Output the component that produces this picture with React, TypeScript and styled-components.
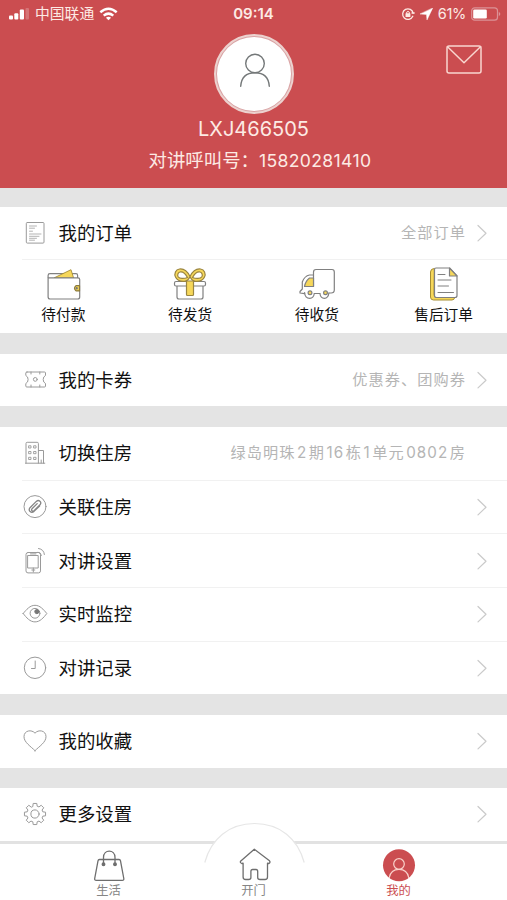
import React from "react";
import styled, { createGlobalStyle } from "styled-components";

const RED = "#cb4d50";
const GREY = "#e4e4e4";
const YELLOW = "#f6d75a";

const GlobalStyle = createGlobalStyle`
  * { box-sizing: border-box; }
  body {
    margin: 0;
    background: #fff;
    font-family: Inter, "Noto Sans CJK SC", sans-serif;
  }
`;

const Screen = styled.div`
  width: 507px;
  height: 900px;
  display: flex;
  flex-direction: column;
  overflow: hidden;
  background: ${GREY};
`;

const Header = styled.header`
  height: 188px;
  flex: none;
  display: flex;
  flex-direction: column;
  background: ${RED};
  color: #fdeae4;
`;

const StatusBar = styled.div`
  height: 28px;
  display: grid;
  grid-template-columns: 1fr auto 1fr;
  align-items: center;
  padding: 0 6px 0 9px;
  font-size: 14.5px;
  line-height: 20px;
`;

const StatusGroup = styled.div<{ $end?: boolean }>`
  display: flex;
  align-items: center;
  justify-content: ${(p) => (p.$end ? "flex-end" : "flex-start")};
  gap: 5px;
`;

const Carrier = styled.span`
  font-size: 14.8px;
  line-height: 20px;
`;

const Percent = styled.span`
  letter-spacing: -0.3px;
`;

const Clock = styled.div`
  font-weight: 600;
  font-size: 15px;
  padding-right: 3px;
`;

const Profile = styled.div`
  display: grid;
  grid-template-columns: 1fr auto 1fr;
  align-items: start;
  padding: 6px 25px 0;
`;

const Avatar = styled.div`
  grid-column: 2;
  width: 80px;
  height: 80px;
  margin-left: 1px;
  border-radius: 50%;
  border: 2px solid #ecd2cf;
  padding: 1px;
  background: #d9a3a4;
  display: flex;
`;

const AvatarFace = styled.div`
  flex: 1;
  display: flex;
  align-items: center;
  justify-content: center;
  padding: 0 0 6px 1px;
  border-radius: 50%;
  background: #fff;
`;

const MailButton = styled.button`
  justify-self: end;
  margin: 11px 0 0;
  padding: 0;
  border: 0;
  background: none;
  line-height: 0;
`;

const UserName = styled.div`
  margin-top: 3px;
  text-align: center;
  font-size: 20px;
  line-height: 24px;
  letter-spacing: 0;
`;

const CallNumber = styled.div`
  margin: 5px 0 0 13px;
  text-align: center;
  font-size: 18.4px;
  line-height: 28px;
  white-space: nowrap;
`;

const CallDigits = styled.span`
  font-size: 17.6px;
  letter-spacing: 0.35px;
`;

const List = styled.main`
  flex: 1;
  min-height: 0;
  display: flex;
  flex-direction: column;
  gap: 20.5px;
  padding-top: 18.5px;
`;

const Card = styled.section`
  flex: none;
  background: #fff;
`;

const Row = styled.div<{ $divided?: boolean }>`
  height: ${(p) => (p.$divided ? "53.7px" : "52.7px")};
  margin-left: 22px;
  padding-right: 20px;
  display: flex;
  align-items: center;
  border-bottom: ${(p) => (p.$divided ? "1px solid #f1f1f1" : "0")};
`;

const RowLabel = styled.span`
  flex: 1;
  margin-left: 10.5px;
  color: #111;
  font-size: 18.4px;
  line-height: 26px;
`;

const RowNote = styled.span`
  color: #b5b5b5;
  font-size: 15.2px;
  line-height: 24px;
  letter-spacing: 1.05px;
  margin-right: 10px;
`;

const NoteNumber = styled.span`
  margin: 0 1.5px;
`;

const ChevronSlot = styled.span`
  width: 11px;
  height: 18px;
  flex: none;
`;

const OrderGrid = styled.div`
  height: 73px;
  display: grid;
  grid-template-columns: repeat(4, 1fr);
`;

const OrderItem = styled.div`
  display: flex;
  flex-direction: column;
  align-items: center;
  padding-top: 6px;
  color: #111;
  font-size: 14.7px;
  line-height: 22px;
`;

const TabBar = styled.nav`
  position: relative;
  flex: none;
  height: 59px;
  display: grid;
  grid-template-columns: repeat(3, 145px);
  justify-content: center;
  border-top: 3px solid #e2e2e2;
  background: #fff;
`;

const Tab = styled.div<{ $active?: boolean }>`
  position: relative;
  display: flex;
  flex-direction: column;
  align-items: center;
  padding-top: 4px;
  color: ${(p) => (p.$active ? RED : "#858585")};
  font-size: 12.3px;
  line-height: 18px;
`;

const TabBump = styled.svg`
  position: absolute;
  left: 203px;
  top: -22px;
`;

const Drawing = styled.svg`
  display: block;
  flex: none;
  fill: none;
  stroke-linecap: round;
  stroke-linejoin: round;
`;

const RowSvg = ({ children }: { children: React.ReactNode }) => (
  <Drawing width="26" height="28" viewBox="0 0 26 28" stroke="#9a9a9a" strokeWidth="1">
    {children}
  </Drawing>
);

const OrderSvg = ({ children }: { children: React.ReactNode }) => (
  <Drawing width="38" height="38" viewBox="0 0 38 38" stroke="#808080" strokeWidth="1.2">
    {children}
  </Drawing>
);

const Chevron = () => (
  <Drawing width="11" height="18" viewBox="0 0 11 18" stroke="#cacaca" strokeWidth="1.2">
    <path d="M2 1.500 10 9.200 2 16.900" />
  </Drawing>
);

const gearPath = (() => {
  const points: string[] = [];
  for (let i = 0; i < 8; i++) {
    const base = (i * Math.PI) / 4;
    [
      [-0.27, 8.1],
      [-0.17, 10.7],
      [0.17, 10.7],
      [0.27, 8.1],
    ].forEach(([offset, radius]) => {
      const angle = base + offset;
      points.push(`${(13 + radius * Math.sin(angle)).toFixed(2)} ${(14 - radius * Math.cos(angle)).toFixed(2)}`);
    });
  }
  return `M${points.join("L")}Z`;
})();

const rowIcons = {
  order: (
    <RowSvg>
      <rect x="4.3" y="3.5" width="17.7" height="20.6" rx="1" />
      <path d="M7.5 7h7M7.5 9.2h5M7.5 12.2h3M7.5 15h11.5M7.5 17.3h9.5M7.5 19.3h7M7.5 21.2h5" strokeWidth=".9" stroke="#aaa" />
    </RowSvg>
  ),
  ticket: (
    <RowSvg>
      <path d="M5 6h17.500q1 0 1 1v2.500q-2.300 1-2.300 4t2.300 4V20q0 1-1 1H4.800q-1 0-1-1v-2.500q2.300-1 2.300-4t-2.300-4V7q0-1 1.200-1Z" />
      <circle cx="13.3" cy="13.4" r="1.9" />
      <path d="M9 6v2M17.8 6v2M9 19v2M17.8 19v2" />
    </RowSvg>
  ),
  building: (
    <RowSvg>
      <path d="M4 24.200V4.500q0-1.200 1.200-1.200H15.200q1.200 0 1.200 1.200v19.700M16.400 11.500h5.100v12.700M3.500 24.200h19.300M19.200 21v3" />
      <path d="M7 6.800h2v2.200H7zM12 6.800h2v2.200h-2zM7 12.500h2v2.200H7zM12 12.500h2v2.200h-2zM7 18.300h2v2.200H7zM12 18.300h2v2.200h-2z" strokeWidth=".9" />
    </RowSvg>
  ),
  clip: (
    <RowSvg>
      <circle cx="13" cy="13.600" r="11" />
      <path
        d="m17.600 13-5.600 5.400c-2.800 2.400-6.200-.8-4-3.700l6.300-6.300c2.500-2.200 5.900.6 3.700 3.400l-6 5.900c-1.500 1.200-3.200-.4-2-1.900l5.200-5.200"
        stroke="#858585"
        strokeWidth="1.300"
      />
    </RowSvg>
  ),
  phone: (
    <RowSvg>
      <rect x="4" y="5.500" width="14.500" height="20.400" rx="2" />
      <rect x="6" y="8.500" width="10.200" height="12.500" />
      <path d="M8.500 6.900h5.500M11.300 21v4M9.800 23h3" />
      <path d="M16.200 5.200q3 .4 3.200 3.300M16.500 1.500q5.400.7 5.900 6" />
    </RowSvg>
  ),
  eye: (
    <RowSvg>
      <path d="M1.200 13.500C4.500 9.500 8 5.300 13 5.300S21.500 9.500 24.800 13.500C21.500 17.800 18 21.900 13 21.900S4.500 17.800 1.200 13.500Z" />
      <circle cx="13" cy="13.300" r="4.900" />
      <circle cx="14.900" cy="11.600" r="2.100" fill="#777" stroke="#777" />
    </RowSvg>
  ),
  clock: (
    <RowSvg>
      <circle cx="13" cy="13.800" r="10.700" />
      <path d="M13.200 7v7.500H9.500" />
    </RowSvg>
  ),
  heart: (
    <RowSvg>
      <path d="M13 23.700C9 19.500 2 15.500 2 9.700 2 3.200 9.800 2.200 13 6.200c3.200-4 11-3 11 3.500 0 5.800-7 9.800-11 14Z" />
    </RowSvg>
  ),
  gear: (
    <RowSvg>
      <path d={gearPath} />
      <circle cx="13" cy="14" r="4.100" />
    </RowSvg>
  ),
};

const WalletIcon = () => (
  <OrderSvg>
    <path d="M4.100 11.500V9.500Q4.100 7.700 6 7.700H32Q33.600 7.700 33.600 9.500V12" fill="#fff" />
    <path d="M10.500 11.700 27 3.700 29.500 11.700Z" fill={YELLOW} stroke="#a58d35" strokeWidth=".9" />
    <path d="M4.100 11.900H34Q35.700 11.900 35.700 13.600V31Q35.700 33 33.700 33H6.100Q4.100 33 4.100 31Z" fill="#fff" />
    <path d="M35.500 19.700H32q-3 2.600 0 5.200h3.500Z" fill={YELLOW} stroke="#8c7a3a" />
    <circle cx="32.700" cy="22.300" r=".6" stroke="#777" />
  </OrderSvg>
);

const GiftIcon = () => (
  <OrderSvg>
    <path d="M6 19h26v12q0 2-2 2H8q-2 0-2-2Z" fill="#fff" />
    <path d="M5 15.500h28q1.500 0 1.500 1.500v1.500q0 1.500-1.500 1.500H5q-1.500 0-1.500-1.500V17q0-1.500 1.500-1.500Z" fill="#fff" />
    <path
      d="M19 10.500C16 4.500 12.500 2.500 8.500 3c-4 .5-5.500 5-4 8 1.600 3.500 5.500 4.500 9 4.300 3-.2 4.500-2.300 5.500-4.800 1 2.500 2.500 4.600 5.500 4.800 3.500.2 7.400-.8 9-4.300 1.500-3 0-7.500-4-8-4-.5-7.500 1.500-10.500 7.500Z"
      fill={YELLOW}
      stroke="#9a8540"
    />
    <path d="M16.500 11.500C14 7 11.500 5.500 9 6c-2 .5-3 3-1.800 4.800 1.400 1.900 5.600 2.200 9.300.7ZM21.500 11.500C24 7 26.500 5.500 29 6c2 .5 3 3 1.800 4.800-1.400 1.900-5.600 2.200-9.300.7Z" fill="#fff" stroke="#9a8540" />
    <path d="M15.500 15h7v13.500q0 1-1 1h-5q-1 0-1-1Z" fill={YELLOW} stroke="#9a8540" />
  </OrderSvg>
);

const TruckIcon = () => (
  <OrderSvg>
    <path d="M15.500 20.500V6q0-2.500 2.500-2.500H34q2.300 0 2.300 2.500V24q0 3-3.200 3h-2.300" />
    <path d="M15.500 9H11.500Q6.500 10 4.300 16v7L2 25.500v1.500l4.600.7M16.300 27.500h5.600" />
    <path d="M15.500 12v8.500H6.500q1-5.500 5-8.500Z" fill={YELLOW} />
    <path d="M6.600 26.500q.3 5.800 5.200 5.800 3.700 0 4.500-4.800M21.900 27.500q.7 4.800 4.500 4.800t4.500-5.300" />
    <circle cx="12" cy="26.700" r="1.900" fill={YELLOW} />
    <circle cx="27.500" cy="26.700" r="1.900" fill={YELLOW} />
  </OrderSvg>
);

const DocsIcon = () => (
  <OrderSvg>
    <path d="M9 2.500Q5.500 2.700 5.500 6v25q0 3 3 3h18.500q2.500 0 2.800-3H11Q9 31 9 28.500Z" fill={YELLOW} stroke="#a58d35" strokeWidth="1" />
    <path d="M11 2H24.500L32 10v19.500q0 2-2 2H11.500q-2 0-2-2v-26Q9.500 2 11 2Z" fill="#fff" />
    <path d="M24.500 2 32 10h-7.500Z" fill={YELLOW} />
    <path d="M13 8.500h7M13 14h13M13 20h10.500M13 26.500h15.500" strokeWidth="1" />
  </OrderSvg>
);

const SignalIcon = () => (
  <Drawing width="21" height="12" viewBox="0 0 21 12">
    <g fill="#fff">
      <rect x="0" y="7.500" width="4" height="4" rx="1" />
      <rect x="5.300" y="5.300" width="4" height="6.200" rx="1" />
      <rect x="10.800" y="1.500" width="4.200" height="10" rx="1" />
      <rect x="16.500" y="0" width="3.500" height="11.500" rx="1" opacity=".22" />
    </g>
  </Drawing>
);

const WifiIcon = () => (
  <Drawing width="19" height="14" viewBox="0 0 19 14" stroke="#fff" strokeWidth="2.500">
    <path d="M1.300 5.200q8.200-7 16.400 0M4.700 8.600q4.800-3.900 9.600 0" strokeLinecap="butt" />
    <path d="m9.500 13.200-2.600-2.500q2.600-2 5.200 0Z" fill="#fff" stroke="none" />
  </Drawing>
);

const LockIcon = () => (
  <Drawing width="14" height="14" viewBox="0 0 14 14" stroke="#fdeae4" strokeWidth="1.300">
    <path d="M11.800 9.300A5.300 5.300 0 1 1 12.200 6.300M11 6h2.200" />
    <rect x="4.500" y="6.200" width="4.900" height="3.900" rx=".6" fill="#fdeae4" stroke="none" />
    <path d="M5.700 6.500V5.200q1.300-1.700 2.600 0v1.300" strokeWidth="1" />
  </Drawing>
);

const LocationIcon = () => (
  <Drawing width="13" height="12" viewBox="0 0 13 12">
    <path d="M12.600.2 7 11.900 6.500 6.400.4 6Z" fill="#fff" stroke="#fff" strokeWidth=".5" />
  </Drawing>
);

const BatteryIcon = () => (
  <Drawing width="30" height="14" viewBox="0 0 30 14">
    <rect x=".7" y=".8" width="25.800" height="12.400" rx="3" stroke="#dc9296" strokeWidth="1.200" />
    <rect x="2.200" y="2.400" width="13.600" height="9.200" rx="1.300" fill="#fff" />
    <path d="M27.800 5v4q1.500-.6 1.500-2t-1.500-2Z" fill="#dc9296" />
  </Drawing>
);

const PersonIcon = () => (
  <Drawing width="34" height="38" viewBox="0 0 34 38" stroke="#747879" strokeWidth="1.400">
    <circle cx="17" cy="11.500" r="9.300" />
    <path d="M2.700 34.300q1-13.500 14.300-13.500t14.300 13.500" />
  </Drawing>
);

const MailIcon = () => (
  <Drawing width="36" height="29" viewBox="0 0 36 29" stroke="#f9d6cf" strokeWidth="1.500">
    <rect x="1" y="1" width="34" height="27" rx="2" />
    <path d="m1.500 1.700 16.500 16 16.500-16" />
  </Drawing>
);

const BagIcon = () => (
  <Drawing width="34" height="34" viewBox="0 0 34 34" stroke="#6e6e6e" strokeWidth="1.300">
    <path d="M7.500 11.500H27q1.300 0 1.500 1.300l3.300 17.700q.3 1.800-1.500 1.800H4.200q-1.800 0-1.500-1.800L6 12.800q.2-1.300 1.500-1.300Z" />
    <path d="M11.500 16V9.500c0-8.500 11.500-8.500 11.500 0V16" />
    <circle cx="11.500" cy="16.300" r="1.300" fill="#6e6e6e" />
    <circle cx="23" cy="16.300" r="1.300" fill="#6e6e6e" />
  </Drawing>
);

const HomeIcon = () => (
  <Drawing width="36" height="34" viewBox="0 0 36 34" stroke="#6e6e6e" strokeWidth="1.300">
    <path d="M18.300 1.200 33.500 12.800q1.200 1.500-.5 2.700l-1.500-.3V29q0 2.500-2.500 2.500h-5q-2.300 0-2.300-2v-6q0-2-1.700-2h-3.400q-1.700 0-1.700 2v6q0 2-2.300 2h-3q-2.500 0-2.500-2.500V15.200l-1.300.3q-2.300-1-1-2.500Z" />
  </Drawing>
);

const MeIcon = () => (
  <Drawing width="34" height="34" viewBox="0 0 34 34" stroke="#f9d1ca" strokeWidth="1.200">
    <circle cx="17" cy="17.300" r="16" fill={RED} stroke="none" />
    <circle cx="17" cy="16" r="5.300" />
    <path d="M7.300 29.500q1.500-8.200 9.700-8.200t9.700 8.200" />
  </Drawing>
);

type RowData = { icon: keyof typeof rowIcons; label: string; note?: string; noArrow?: boolean };

const NoteText = ({ text }: { text: string }) => (
  <RowNote>
    {text.split(/(\d+)/).map((part, i) => (i % 2 ? <NoteNumber key={i}>{part}</NoteNumber> : part))}
  </RowNote>
);

const MenuRow = ({ icon, label, note, noArrow, divided }: RowData & { divided?: boolean }) => (
  <Row $divided={divided}>
    {rowIcons[icon]}
    <RowLabel>{label}</RowLabel>
    {note && <NoteText text={note} />}
    <ChevronSlot>{!noArrow && <Chevron />}</ChevronSlot>
  </Row>
);

const homeRows: RowData[] = [
  { icon: "building", label: "切换住房", note: "绿岛明珠2期16栋1单元0802房", noArrow: true },
  { icon: "clip", label: "关联住房" },
  { icon: "phone", label: "对讲设置" },
  { icon: "eye", label: "实时监控" },
  { icon: "clock", label: "对讲记录" },
];

const orderStates = [
  { label: "待付款", Icon: WalletIcon },
  { label: "待发货", Icon: GiftIcon },
  { label: "待收货", Icon: TruckIcon },
  { label: "售后订单", Icon: DocsIcon },
];

export default function App() {
  return (
    <>
      <GlobalStyle />
      <Screen>
        <Header>
          <StatusBar>
            <StatusGroup>
              <SignalIcon />
              <Carrier>中国联通</Carrier>
              <WifiIcon />
            </StatusGroup>
            <Clock>09:14</Clock>
            <StatusGroup $end>
              <LockIcon />
              <LocationIcon />
              <Percent>61%</Percent>
              <BatteryIcon />
            </StatusGroup>
          </StatusBar>
          <Profile>
            <Avatar>
              <AvatarFace>
                <PersonIcon />
              </AvatarFace>
            </Avatar>
            <MailButton aria-label="消息">
              <MailIcon />
            </MailButton>
          </Profile>
          <UserName>LXJ466505</UserName>
          <CallNumber>
            对讲呼叫号：<CallDigits>15820281410</CallDigits>
          </CallNumber>
        </Header>
        <List>
          <Card>
            <MenuRow icon="order" label="我的订单" note="全部订单" divided />
            <OrderGrid>
              {orderStates.map(({ label, Icon }) => (
                <OrderItem key={label}>
                  <Icon />
                  {label}
                </OrderItem>
              ))}
            </OrderGrid>
          </Card>
          <Card>
            <MenuRow icon="ticket" label="我的卡券" note="优惠券、团购券" />
          </Card>
          <Card>
            {homeRows.map((row, i) => (
              <MenuRow key={row.label} {...row} divided={i < homeRows.length - 1} />
            ))}
          </Card>
          <Card>
            <MenuRow icon="heart" label="我的收藏" />
          </Card>
          <Card>
            <MenuRow icon="gear" label="更多设置" />
          </Card>
        </List>
        <TabBar>
          <TabBump width="103" height="44" viewBox="0 0 103 44">
            <path d="M1.300 41.500C7 18 25 1.500 51.500 1.500S96 18 101.700 41.500V44H1.300Z" fill="#fff" />
            <path d="M1.800 40.500C8 17 26 1.500 51.500 1.500S95 17 101.200 40.500" fill="none" stroke="#e6e6e6" strokeWidth="1.200" />
          </TabBump>
          <Tab>
            <BagIcon />
            生活
          </Tab>
          <Tab>
            <HomeIcon />
            开门
          </Tab>
          <Tab $active>
            <MeIcon />
            我的
          </Tab>
        </TabBar>
      </Screen>
    </>
  );
}
